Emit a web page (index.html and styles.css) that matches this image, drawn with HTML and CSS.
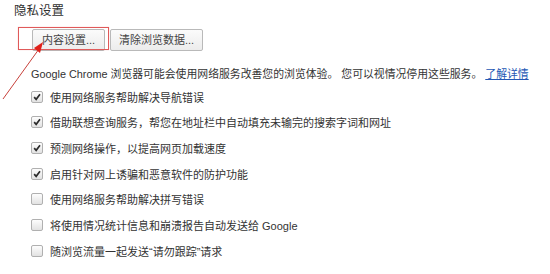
FILE: index.html
```html
<!DOCTYPE html>
<html lang="zh-CN">
<head>
<meta charset="utf-8">
<link rel="stylesheet" href="styles.css">
</head>
<body>
<div class="page">
  <h3 class="title">隐私设置</h3>
  <div class="buttons">
    <button class="btn btn-content">内容设置...</button>
    <button class="btn btn-clear">清除浏览数据...</button>
    <div class="highlight"></div>
  </div>
  <p class="desc">Google Chrome 浏览器可能会使用网络服务改善您的浏览体验。 您可以视情况停用这些服务。 <a class="link" href="#">了解详情</a></p>
  <ul class="options">
    <li class="option"><span class="box checked"><svg viewBox="0 0 12 12" class="tick"><path d="M2.6 6.2 L5 8.8 L9.6 2.8" /></svg></span><span>使用网络服务帮助解决导航错误</span></li>
    <li class="option"><span class="box checked"><svg viewBox="0 0 12 12" class="tick"><path d="M2.6 6.2 L5 8.8 L9.6 2.8" /></svg></span><span>借助联想查询服务，帮您在地址栏中自动填充未输完的搜索字词和网址</span></li>
    <li class="option"><span class="box checked"><svg viewBox="0 0 12 12" class="tick"><path d="M2.6 6.2 L5 8.8 L9.6 2.8" /></svg></span><span>预测网络操作，以提高网页加载速度</span></li>
    <li class="option"><span class="box checked"><svg viewBox="0 0 12 12" class="tick"><path d="M2.6 6.2 L5 8.8 L9.6 2.8" /></svg></span><span>启用针对网上诱骗和恶意软件的防护功能</span></li>
    <li class="option"><span class="box"></span><span>使用网络服务帮助解决拼写错误</span></li>
    <li class="option"><span class="box"></span><span>将使用情况统计信息和崩溃报告自动发送给 Google</span></li>
    <li class="option"><span class="box"></span><span>随浏览流量一起发送“请勿跟踪”请求</span></li>
  </ul>
  <svg class="arrow" width="60" height="110" viewBox="0 0 60 110">
    <line x1="3" y1="99" x2="39" y2="49" stroke="#c8403a" stroke-width="1"/>
    <polygon points="43,42 34,48 40,53" fill="#e0201a"/>
  </svg>
</div>
</body>
</html>
```
FILE: styles.css
```css
* { box-sizing: border-box; }
html, body { margin: 0; padding: 0; background: #ffffff; }
body {
  font-family: "Liberation Sans", "Noto Sans CJK SC", sans-serif;
  font-size: 11px;
  color: #333;
}
.page {
  position: relative;
  width: 550px;
  height: 274px;
  overflow: hidden;
}
.title {
  margin: 0;
  padding: 3px 0 0 14px;
  font-size: 12.5px;
  font-weight: normal;
  line-height: 16px;
  color: #303030;
}
.buttons {
  position: relative;
  display: flex;
  gap: 5px;
  margin: 10px 0 0 32px;
  height: 22px;
}
.btn {
  height: 22px;
  padding: 0;
  border: 1px solid #b9b9b9;
  border-radius: 2px;
  background: linear-gradient(#fbfbfb, #ececec);
  font-family: inherit;
  font-size: 11px;
  color: #444;
  line-height: 20px;
}
.btn-content { width: 73px; }
.btn-clear { width: 93px; }
.highlight {
  position: absolute;
  left: -14px;
  top: -2px;
  width: 91px;
  height: 23px;
  border: 1px solid #e05a5a;
  box-shadow: 0 0 1px rgba(224, 90, 90, 0.4);
  pointer-events: none;
}
.desc {
  margin: 14px 0 0 31px;
  font-size: 10.85px;
  line-height: 18px;
  white-space: nowrap;
  color: #333;
}
.link {
  color: #2457b4;
  text-decoration: underline;
}
.options {
  list-style: none;
  margin: 1px 0 0 31px;
  padding: 0;
}
.option {
  display: flex;
  align-items: center;
  gap: 7px;
  height: 25.67px;
  white-space: nowrap;
}
.box {
  flex: none;
  width: 12px;
  height: 12px;
  border: 1px solid #b0b0b0;
  border-radius: 2px;
  background: linear-gradient(#fdfdfd, #e2e2e2);
  display: flex;
  align-items: center;
  justify-content: center;
}
.tick {
  width: 10px;
  height: 10px;
}
.tick path {
  fill: none;
  stroke: #2b2b2b;
  stroke-width: 2;
}
.arrow {
  position: absolute;
  left: 0;
  top: 0;
}
```
